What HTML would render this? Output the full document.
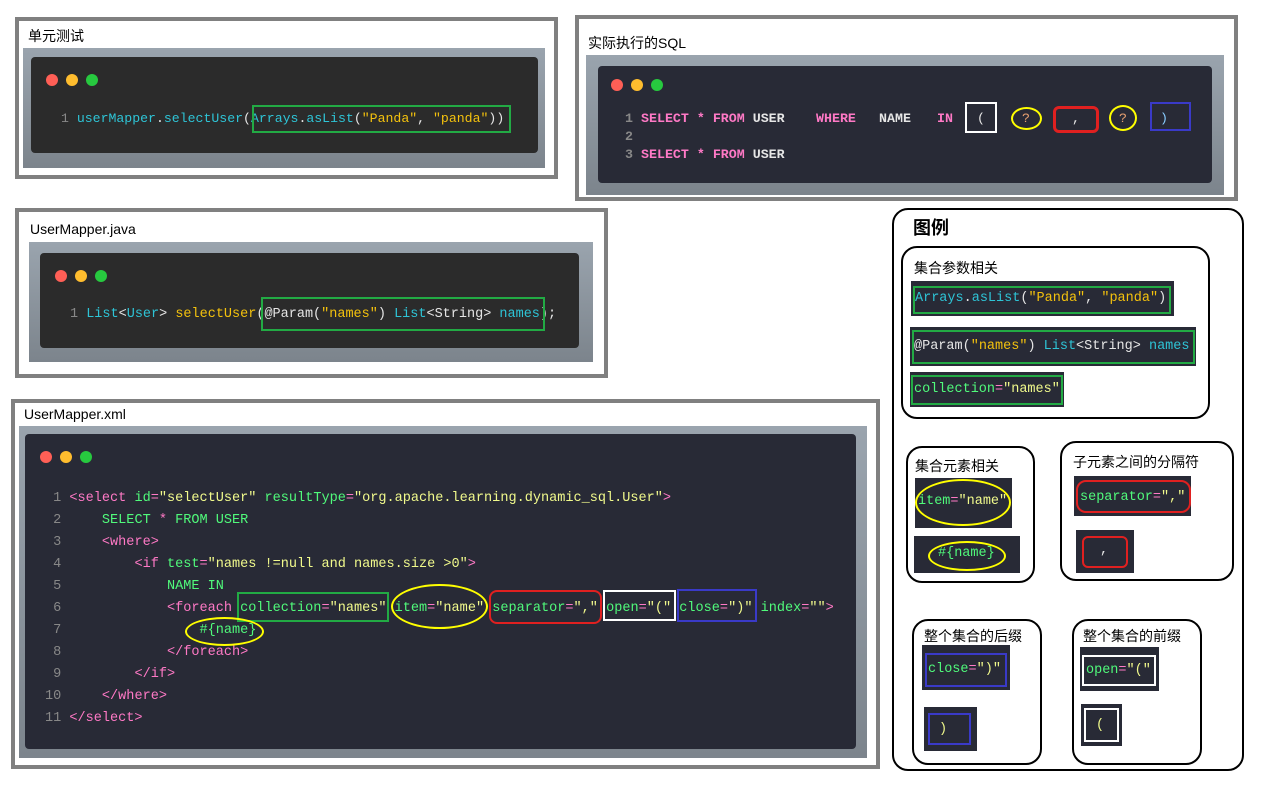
<!DOCTYPE html>
<html><head><meta charset="utf-8"><style>
body{margin:0;width:1268px;height:792px;background:#fff;position:relative;overflow:hidden;font-family:"Liberation Sans","Noto Sans CJK SC",sans-serif}
.a{position:absolute;box-sizing:border-box}
.frame{border:4px solid #808080;background:#fff}
.ttl{font-size:14px;color:#000;white-space:nowrap}
.back{background:linear-gradient(#9aa4ae,#7c848c)}
.dark{border-radius:4px}
.dots span{display:inline-block;width:12px;height:12px;border-radius:50%;margin-right:8px}
.r{background:#ff5f56}.y{background:#ffbd2e}.g{background:#27c93f}
.code{font-family:"Liberation Mono","DejaVu Sans Mono",monospace;white-space:pre;position:absolute}
.cy{color:#2ec4d6}.yl{color:#f4c20d}.wh{color:#e6e6e6}.gr{color:#50fa7b}.pk{color:#ff79c6}.st{color:#f1fa8c}.ln{color:#888}
.box{position:absolute;box-sizing:border-box}
.leg{border:2.5px solid #000;border-radius:16px;background:#fff}
.chip{background:#282a36}
.sq{position:absolute;font-family:"Liberation Mono",monospace;font-size:13.3px;font-weight:bold;white-space:pre}
</style></head><body>

<!-- Frame 1 -->
<div class="a frame" style="left:15px;top:17px;width:543px;height:162px"></div>
<div class="a ttl" style="left:28px;top:26px">单元测试</div>
<div class="a back" style="left:23px;top:48px;width:522px;height:120px"></div>
<div class="a dark" style="left:31px;top:57px;width:507px;height:96px;background:#2b2b2b"></div>
<div class="a dots" style="left:46px;top:73px"><span class="r"></span><span class="y"></span><span class="g"></span></div>
<div class="code" style="left:61px;top:111px;font-size:13.2px"><span class="ln">1 </span><span class="cy">userMapper</span><span class="wh">.</span><span class="cy">selectUser</span><span class="wh">(</span><span class="cy">Arrays</span><span class="wh">.</span><span class="cy">asList</span><span class="wh">(</span><span class="yl">"Panda"</span><span class="wh">, </span><span class="yl">"panda"</span><span class="wh">))</span></div>
<div class="box" style="left:252px;top:105px;width:259px;height:28px;border:2px solid #22aa44"></div>

<!-- Frame 2 -->
<div class="a frame" style="left:575px;top:15px;width:663px;height:186px"></div>
<div class="a ttl" style="left:588px;top:33px">实际执行的SQL</div>
<div class="a back" style="left:586px;top:55px;width:638px;height:140px"></div>
<div class="a dark" style="left:598px;top:66px;width:614px;height:117px;background:#282a36"></div>
<div class="a dots" style="left:611px;top:78px"><span class="r"></span><span class="y"></span><span class="g"></span></div>
<div class="sq ln" style="left:625px;top:111px">1</div>
<div class="sq ln" style="left:625px;top:129px">2</div>
<div class="sq ln" style="left:625px;top:147px">3</div>
<div class="sq" style="left:641px;top:111px"><span class="pk">SELECT * FROM</span> <span class="wh">USER</span></div>
<div class="sq pk" style="left:816px;top:111px">WHERE</div>
<div class="sq wh" style="left:879px;top:111px">NAME</div>
<div class="sq pk" style="left:937px;top:111px">IN</div>
<div class="sq wh" style="left:977px;top:111px;font-weight:normal">(</div>
<div class="sq" style="left:1022px;top:111px;color:#e8a070;font-weight:normal">?</div>
<div class="sq wh" style="left:1072px;top:111px;font-weight:normal">,</div>
<div class="sq" style="left:1119px;top:111px;color:#e8a070;font-weight:normal">?</div>
<div class="sq" style="left:1160px;top:111px;color:#8cf;font-weight:normal">)</div>
<div class="sq" style="left:641px;top:147px"><span class="pk">SELECT * FROM</span> <span class="wh">USER</span></div>
<div class="box" style="left:965px;top:102px;width:32px;height:31px;border:2px solid #fff"></div>
<div class="box" style="left:1011px;top:107px;width:31px;height:23px;border:2.5px solid #ff0;border-radius:50%"></div>
<div class="box" style="left:1053px;top:106px;width:46px;height:27px;border:3px solid #e02020;border-radius:6px"></div>
<div class="box" style="left:1109px;top:105px;width:28px;height:26px;border:2.5px solid #ff0;border-radius:50%"></div>
<div class="box" style="left:1150px;top:102px;width:41px;height:29px;border:2.5px solid #3a3ac8"></div>

<!-- Frame 3 -->
<div class="a frame" style="left:15px;top:208px;width:593px;height:170px"></div>
<div class="a ttl" style="left:30px;top:221px">UserMapper.java</div>
<div class="a back" style="left:29px;top:242px;width:564px;height:120px"></div>
<div class="a dark" style="left:40px;top:253px;width:539px;height:95px;background:#2b2b2b"></div>
<div class="a dots" style="left:55px;top:269px"><span class="r"></span><span class="y"></span><span class="g"></span></div>
<div class="code" style="left:70px;top:307px;font-size:13.5px"><span class="ln">1 </span><span class="cy">List</span><span class="wh">&lt;</span><span class="cy">User</span><span class="wh">&gt; </span><span class="yl">selectUser</span><span class="wh">(@Param(</span><span class="yl">"names"</span><span class="wh">) </span><span class="cy">List</span><span class="wh">&lt;String&gt; </span><span class="cy">names</span><span class="wh">);</span></div>
<div class="box" style="left:261px;top:297px;width:284px;height:34px;border:2px solid #22aa44"></div>

<!-- Frame 4 -->
<div class="a frame" style="left:11px;top:399px;width:869px;height:370px"></div>
<div class="a ttl" style="left:24px;top:406px">UserMapper.xml</div>
<div class="a back" style="left:19px;top:426px;width:848px;height:332px"></div>
<div class="a dark" style="left:25px;top:434px;width:831px;height:315px;background:#282a36"></div>
<div class="a dots" style="left:40px;top:450px"><span class="r"></span><span class="y"></span><span class="g"></span></div>
<div class="code" style="left:45px;top:488px;font-size:13.55px;line-height:22px"><span class="ln"> 1 </span><span class="pk">&lt;select</span> <span class="gr">id</span><span class="pk">=</span><span class="st">"selectUser"</span> <span class="gr">resultType</span><span class="pk">=</span><span class="st">"org.apache.learning.dynamic_sql.User"</span><span class="pk">&gt;</span>
<span class="ln"> 2 </span>    <span class="gr">SELECT</span> <span class="pk">*</span> <span class="gr">FROM USER</span>
<span class="ln"> 3 </span>    <span class="pk">&lt;where&gt;</span>
<span class="ln"> 4 </span>        <span class="pk">&lt;if</span> <span class="gr">test</span><span class="pk">=</span><span class="st">"names !=null and names.size &gt;0"</span><span class="pk">&gt;</span>
<span class="ln"> 5 </span>            <span class="gr">NAME IN</span>
<span class="ln"> 6 </span>            <span class="pk">&lt;foreach</span> <span class="gr">collection</span><span class="pk">=</span><span class="st">"names"</span> <span class="gr">item</span><span class="pk">=</span><span class="st">"name"</span> <span class="gr">separator</span><span class="pk">=</span><span class="st">","</span> <span class="gr">open</span><span class="pk">=</span><span class="st">"("</span> <span class="gr">close</span><span class="pk">=</span><span class="st">")"</span> <span class="gr">index</span><span class="pk">=</span><span class="st">""</span><span class="pk">&gt;</span>
<span class="ln"> 7 </span>                <span class="gr">#{name}</span>
<span class="ln"> 8 </span>            <span class="pk">&lt;/foreach&gt;</span>
<span class="ln"> 9 </span>        <span class="pk">&lt;/if&gt;</span>
<span class="ln">10 </span>    <span class="pk">&lt;/where&gt;</span>
<span class="ln">11 </span><span class="pk">&lt;/select&gt;</span></div>
<div class="box" style="left:237px;top:592px;width:152px;height:30px;border:2.5px solid #22aa44"></div>
<div class="box" style="left:391px;top:584px;width:97px;height:45px;border:2.5px solid #ff0;border-radius:50%"></div>
<div class="box" style="left:489px;top:590px;width:113px;height:34px;border:2.5px solid #e02020;border-radius:8px"></div>
<div class="box" style="left:603px;top:590px;width:73px;height:31px;border:2.5px solid #fff"></div>
<div class="box" style="left:677px;top:589px;width:80px;height:33px;border:2.5px solid #3a3ac8"></div>
<div class="box" style="left:185px;top:617px;width:79px;height:29px;border:2.5px solid #ff0;border-radius:50%"></div>

<!-- Legend -->
<div class="box leg" style="left:892px;top:208px;width:352px;height:563px"></div>
<div class="a" style="left:913px;top:214px;font-size:18px;font-weight:bold">图例</div>

<div class="box leg" style="left:901px;top:246px;width:309px;height:173px"></div>
<div class="a ttl" style="left:914px;top:258px">集合参数相关</div>
<div class="box chip" style="left:911px;top:281px;width:263px;height:35px"></div>
<div class="box" style="left:913px;top:286px;width:258px;height:28px;border:2.5px solid #22aa44"></div>
<div class="code" style="left:915px;top:291px;font-size:13.5px"><span class="cy">Arrays</span><span class="wh">.</span><span class="cy">asList</span><span class="wh">(</span><span class="yl">"Panda"</span><span class="wh">, </span><span class="yl">"panda"</span><span class="wh">)</span></div>
<div class="box chip" style="left:910px;top:327px;width:286px;height:39px"></div>
<div class="box" style="left:912px;top:330px;width:283px;height:34px;border:2.5px solid #22aa44"></div>
<div class="code" style="left:914px;top:339px;font-size:13.5px"><span class="wh">@Param(</span><span class="yl">"names"</span><span class="wh">) </span><span class="cy">List</span><span class="wh">&lt;String&gt; </span><span class="cy">names</span></div>
<div class="box chip" style="left:910px;top:372px;width:154px;height:35px"></div>
<div class="box" style="left:911px;top:375px;width:152px;height:30px;border:2.5px solid #22aa44"></div>
<div class="code" style="left:914px;top:382px;font-size:13.5px"><span class="gr">collection</span><span class="pk">=</span><span class="st">"names"</span></div>

<div class="box leg" style="left:906px;top:446px;width:129px;height:137px"></div>
<div class="a ttl" style="left:915px;top:456px">集合元素相关</div>
<div class="box chip" style="left:915px;top:478px;width:97px;height:50px"></div>
<div class="code" style="left:918px;top:494px;font-size:13.5px"><span class="gr">item</span><span class="pk">=</span><span class="st">"name"</span></div>
<div class="box" style="left:915px;top:479px;width:96px;height:47px;border:2.5px solid #ff0;border-radius:50%"></div>
<div class="box chip" style="left:914px;top:536px;width:106px;height:37px"></div>
<div class="code" style="left:938px;top:546px;font-size:13.5px"><span class="gr">#{name}</span></div>
<div class="box" style="left:928px;top:541px;width:78px;height:30px;border:2.5px solid #ff0;border-radius:50%"></div>

<div class="box leg" style="left:1060px;top:441px;width:174px;height:140px"></div>
<div class="a ttl" style="left:1073px;top:452px">子元素之间的分隔符</div>
<div class="box chip" style="left:1074px;top:476px;width:117px;height:40px"></div>
<div class="code" style="left:1080px;top:490px;font-size:13.5px"><span class="gr">separator</span><span class="pk">=</span><span class="st">","</span></div>
<div class="box" style="left:1076px;top:480px;width:115px;height:33px;border:2.5px solid #e02020;border-radius:10px"></div>
<div class="box chip" style="left:1076px;top:530px;width:58px;height:43px"></div>
<div class="box" style="left:1082px;top:536px;width:46px;height:32px;border:2.5px solid #e02020;border-radius:6px"></div>
<div class="code wh" style="left:1100px;top:543px;font-size:13.5px">,</div>

<div class="box leg" style="left:912px;top:619px;width:130px;height:146px"></div>
<div class="a ttl" style="left:924px;top:626px">整个集合的后缀</div>
<div class="box chip" style="left:922px;top:645px;width:88px;height:45px"></div>
<div class="box" style="left:925px;top:653px;width:82px;height:34px;border:2.5px solid #3a3ac8"></div>
<div class="code" style="left:928px;top:662px;font-size:13.5px"><span class="gr">close</span><span class="pk">=</span><span class="st">")"</span></div>
<div class="box chip" style="left:924px;top:707px;width:53px;height:44px"></div>
<div class="box" style="left:928px;top:713px;width:43px;height:32px;border:2.5px solid #3a3ac8"></div>
<div class="code st" style="left:939px;top:722px;font-size:13.5px">)</div>

<div class="box leg" style="left:1072px;top:619px;width:130px;height:146px"></div>
<div class="a ttl" style="left:1083px;top:626px">整个集合的前缀</div>
<div class="box chip" style="left:1080px;top:647px;width:79px;height:44px"></div>
<div class="box" style="left:1082px;top:655px;width:74px;height:31px;border:2.5px solid #fff"></div>
<div class="code" style="left:1086px;top:663px;font-size:13.5px"><span class="gr">open</span><span class="pk">=</span><span class="st">"("</span></div>
<div class="box chip" style="left:1081px;top:704px;width:41px;height:42px"></div>
<div class="box" style="left:1084px;top:708px;width:35px;height:34px;border:2.5px solid #fff"></div>
<div class="code st" style="left:1096px;top:718px;font-size:13.5px">(</div>

</body></html>
